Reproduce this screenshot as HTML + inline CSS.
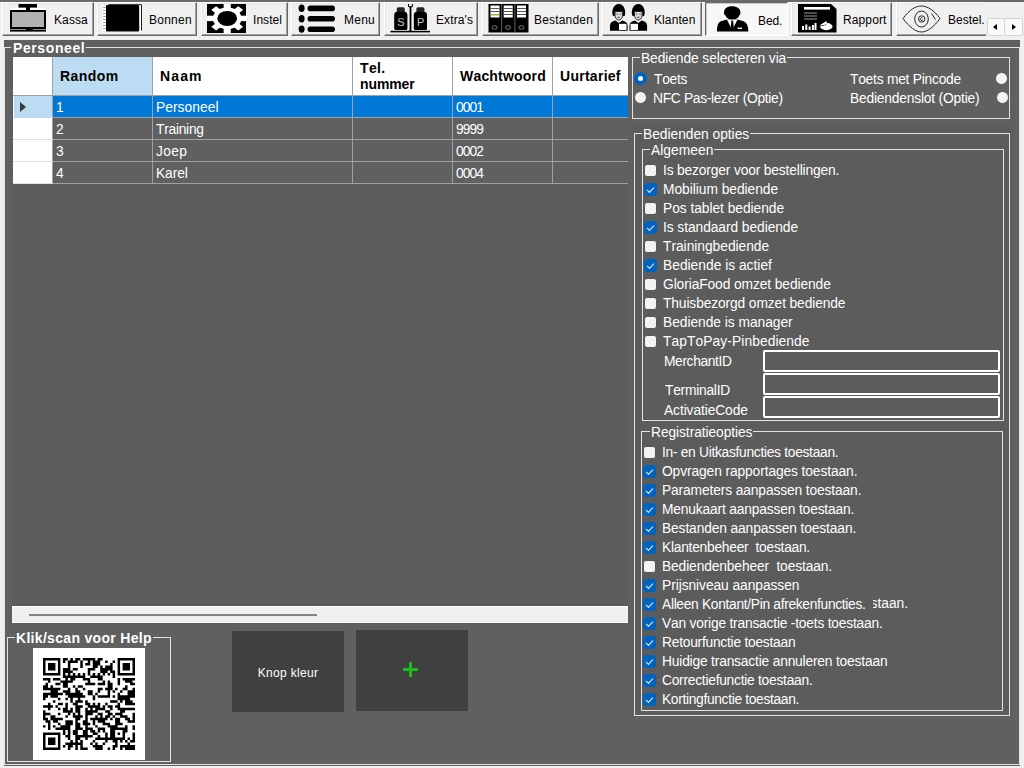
<!DOCTYPE html>
<html lang="nl">
<head>
<meta charset="utf-8">
<title>Personeel</title>
<style>
*{box-sizing:border-box;margin:0;padding:0}
html,body{font-kerning:none;width:1024px;height:768px;overflow:hidden;background:#f0f0f0;font-family:"Liberation Sans",Arial,sans-serif;color:#fff}
.abs{position:absolute}
#top{position:absolute;left:0;top:0;width:1024px;height:2px;background:#696969}
.tab{position:absolute;top:2px;height:34px;background:#f0f0f0;border:1px solid;border-color:#fff #696969 #696969 #fff;box-shadow:inset -1px -1px 0 #a0a0a0,inset 1px 1px 0 #e6e6e6;color:#000;font-size:12px;white-space:nowrap}
.tab span{position:absolute;top:10px;line-height:14px}
.tab svg{position:absolute}
.tab.sel{background:repeating-conic-gradient(#fff 0 25%,#f0f0f0 0 50%) 0 0/2px 2px;border-color:#696969 #fff #fff #696969;box-shadow:inset 1px 1px 0 #c8c8c8}
#panel{position:absolute;left:4px;top:40px;width:1016px;height:726px;background:#606060}
.gb{position:absolute;border:1px solid #e4e4e4}
.gb>.lg{position:absolute;background:#606060;white-space:nowrap;font-size:13.8px;line-height:15px;padding:0 1px}
.gb>.lg.b{font-weight:bold;font-size:14px;line-height:14px;margin-top:0}
.t{position:absolute;white-space:nowrap;font-size:13.8px;line-height:16px;margin-top:1px}
.cb{position:absolute;width:13px;height:13px;border-radius:3px;background:#f3f3f3;border:1px solid #575757}
.cb.on{background:#0063c0;border-color:#0063c0}
.cb.on:after{content:"";position:absolute;left:2.2px;top:3px;width:6.1px;height:3.1px;border-left:.9px solid #ececec;border-bottom:.9px solid #ececec;transform:rotate(-46deg)}
.rb{position:absolute;width:13px;height:13px;border-radius:50%;background:#f3f3f3;border:1px solid #585858}
.rb.on{background:#fff;border:4px solid #0063c0}
.tb{position:absolute;border:2px solid #fff;background:#5c5c5c;border-radius:2px}

.hd{position:absolute;top:0;height:39px;border-right:1px solid #a0a0a0;border-bottom:1px solid #a0a0a0;color:#000;font-weight:bold;font-size:14px;line-height:16px;display:flex;align-items:center;padding-left:7px}
.rh{position:absolute;left:0;width:40px;height:22px;background:#fff;border-right:1px solid #a0a0a0;border-bottom:1px solid #e0e0e0}
.rh.sel{background:#bcdcf4;border-left:1px solid #fff;border-bottom-color:#bcdcf4}
.rh i{position:absolute;left:5.6px;top:6.2px;border-left:6.3px solid #3a3a3a;border-top:5.2px solid transparent;border-bottom:5.2px solid transparent}
.c{position:absolute;height:22px;border-right:1px solid #a0a0a0;border-bottom:1px solid #a0a0a0;font-size:13.8px;line-height:21px;padding:1px 0 0 3px;white-space:nowrap;background:#606060}
.c.sel{background:#0078d7}
.gb.r>.lg{background:#5c5c5c}
.spin{position:absolute;top:18px;width:18px;height:18px;background:#fafafa;border:1px solid #d4d4d4;border-radius:2px}
.spin i{position:absolute;top:5px;width:0;height:0;border-top:3px solid transparent;border-bottom:3px solid transparent}
</style>
</head>
<body>
<div id="top"></div>
<!--TABS-->
<div class="tab" style="left:2px;width:92px">
<svg style="left:7px;top:1px" width="38" height="30" viewBox="0 0 38 30"><rect x="8.5" y="0" width="18.5" height="3.6" fill="#000"/><rect x="0" y="4" width="36" height="2.200" fill="#fff"/><rect x="16" y="3" width="4" height="4" fill="#000"/><rect x="1" y="7" width="34" height="17" fill="#b2b2b2" stroke="#000" stroke-width="2"/><rect x="16" y="24" width="7" height="2" fill="#000"/><rect x="0" y="25.6" width="36" height="2" fill="#000"/></svg>
<span style="left:51px;letter-spacing:0.1px">Kassa</span></div>
<div class="tab" style="left:97px;width:100px">
<svg style="left:5px;top:1px;overflow:visible" width="42" height="30" viewBox="0 0 42 30"><rect x="5" y="0.200" width="34" height="26.600" rx="1.200" fill="#000"/><rect x="5.800" y="1.100" width="32.300" height="27" fill="#fff"/><rect x="-0.300" y="1.800" width="4" height="25.400" fill="#fff"/><path d="M0.200 3.500h2.600M0.200 6.500h2.600M0.200 9.500h2.600M0.200 12.500h2.600M0.200 15.500h2.600M0.200 18.500h2.600M0.200 21.500h2.600M0.200 24.500h2.600" stroke="#999" stroke-width="1"/><rect x="3" y="1" width="33.200" height="26.600" rx="1" fill="#000"/></svg>
<span style="left:51px;letter-spacing:0.25px">Bonnen</span></div>
<div class="tab" style="left:201px;width:87px">
<svg style="left:5px;top:1px" width="40" height="30" viewBox="0 0 40 30"><rect x="0" y="0" width="39" height="29" fill="#000"/><g transform="translate(20.200 14.400) scale(1.32 1)" fill="#fff"><circle r="10.8"/><rect x="-2.700" y="-15" width="5.400" height="30"/><rect x="-16" y="-2.700" width="32" height="5.400"/><rect x="-2.600" y="-14.500" width="5.200" height="29" transform="rotate(45)"/><rect x="-2.600" y="-14.500" width="5.200" height="29" transform="rotate(-45)"/><circle r="7.500" fill="#000"/></g></svg>
<span style="left:51px;letter-spacing:0.05px">Instel</span></div>
<div class="tab" style="left:291px;width:89px">
<svg style="left:6px;top:1px" width="40" height="30" viewBox="0 0 40 30" fill="#000"><ellipse cx="3.600" cy="4.300" rx="3" ry="3.700"/><ellipse cx="3.600" cy="14.800" rx="3" ry="3.700"/><ellipse cx="3.600" cy="25.100" rx="3" ry="3.700"/><rect x="9.500" y="1.600" width="27.500" height="5.600" rx="2.800"/><rect x="9.500" y="12" width="27.500" height="5.600" rx="2.800"/><rect x="9.500" y="22.400" width="27.500" height="5.600" rx="2.800"/></svg>
<span style="left:52px;letter-spacing:0.25px">Menu</span></div>
<div class="tab" style="left:384px;width:94px">
<svg style="left:5px;top:0px" width="42" height="31" viewBox="0 0 42 31"><rect x="0.500" y="27.800" width="39.500" height="1.600" fill="#000"/><rect x="19.600" y="4" width="1.800" height="24" fill="#000"/><path d="M18.600 1v2.700h3.800V1" fill="none" stroke="#000" stroke-width="1"/><g><path d="M6.800 5.800q0-1.600 1.600-1.600h4.800q1.600 0 1.600 1.600v3.400h-8z" fill="#222"/><path d="M4.200 12q0-2.800 3-3.200h7.200q3 0.400 3 3.200v13.500q0 1.500-1.500 1.500h-10.200q-1.500 0-1.500-1.500z" fill="#000"/></g><g transform="translate(19.600 0)"><path d="M6.800 5.800q0-1.600 1.600-1.600h4.800q1.600 0 1.600 1.600v3.400h-8z" fill="#222"/><path d="M4.200 12q0-2.800 3-3.200h7.200q3 0.400 3 3.200v13.500q0 1.500-1.500 1.500h-10.200q-1.500 0-1.500-1.500z" fill="#000"/></g><text x="10.800" y="23" font-size="11" font-family="Liberation Sans,sans-serif" fill="#c4c4c4" text-anchor="middle">S</text><text x="30.600" y="23" font-size="11" font-family="Liberation Sans,sans-serif" fill="#c4c4c4" text-anchor="middle">P</text></svg>
<span style="left:51px;letter-spacing:0.1px">Extra's</span></div>
<div class="tab" style="left:482px;width:117px">
<svg style="left:5px;top:1px" width="42" height="30" viewBox="0 0 42 30"><rect x="0.500" y="0" width="40" height="28.500" fill="#000"/><rect x="13.300" y="0" width="0.800" height="28.500" fill="#777"/><rect x="26.500" y="0" width="0.800" height="28.500" fill="#777"/><g fill="#fff"><rect x="2.500" y="1.500" width="9" height="12"/><rect x="15.700" y="1.500" width="9" height="12"/><rect x="29" y="1.500" width="9" height="12"/></g><path d="M2.500 4.500h9M2.500 7.500h9M15.700 4.500h9M15.700 7.500h9M15.700 10.500h9M29 4.500h9M29 7.500h9M29 10.500h9" stroke="#555" stroke-width="1.200"/><path d="M2.500 10.800h9" stroke="#a09000" stroke-width="1.200"/><g fill="none" stroke="#8a8a8a" stroke-width="0.900"><ellipse cx="6.500" cy="23.500" rx="2.600" ry="1.800"/><ellipse cx="20" cy="23.500" rx="2.600" ry="1.800"/><ellipse cx="33.500" cy="23.500" rx="2.600" ry="1.800"/></g></svg>
<span style="left:51px;letter-spacing:0.18px">Bestanden</span></div>
<div class="tab" style="left:602px;width:100px">
<svg style="left:6px;top:0px" width="40" height="30" viewBox="0 0 40 30"><g id="pa"><path d="M3.800 12.500c-1.500-4 0.500-11.500 6-11.500s7.500 7.500 6 11.500c-0.500 1-1.500 1-2 0v-4h-8v4c-0.500 1-1.500 1-2 0z" fill="#000"/><path d="M6 8.500h7.600v3.500c0 3-1.800 5-3.800 5s-3.800-2-3.800-5z" fill="#ddd" stroke="#000" stroke-width="0.800"/><path d="M7.500 11h1.500M10.800 11h1.500M8.500 14.300h2.600" stroke="#333" stroke-width="0.900"/><path d="M1 27.800v-5c0-3 2-4.500 5.500-5.300l3.300 2.500 3.300-2.500c3.500 0.800 5.500 2.300 5.500 5.300v5z" fill="#000"/></g><rect x="10" y="20.800" width="7.500" height="6.200" fill="#fff"/><g transform="translate(19.500 0)"><path d="M3.800 12.500c-1.500-4 0.500-11.500 6-11.500s7.500 7.500 6 11.500c-0.500 1-1.500 1-2 0v-4h-8v4c-0.500 1-1.500 1-2 0z" fill="#000"/><path d="M6 8.500h7.600v3.500c0 3-1.800 5-3.800 5s-3.800-2-3.800-5z" fill="#ddd" stroke="#000" stroke-width="0.800"/><path d="M7.500 11h1.500M10.800 11h1.500M8.500 14.300h2.600" stroke="#333" stroke-width="0.900"/><path d="M1 27.800v-5c0-3 2-4.500 5.500-5.300l3.300 2.500 3.300-2.500c3.500 0.800 5.500 2.300 5.500 5.300v5z" fill="#000"/><rect x="2" y="20.800" width="7.500" height="6.200" fill="#fff"/></g></svg>
<span style="left:51px;letter-spacing:0.1px">Klanten</span></div>
<div class="tab sel" style="left:705px;width:83px">
<svg style="left:10px;top:2px" width="36" height="28" viewBox="0 0 36 28"><path d="M8 7.500c0-4 3-6.300 8-6.300s8.500 2.300 8.500 6.300c0 1.500-0.500 2.500-1.300 3c-0.500 2-3 3.700-4.500 4h-4.500c-2-0.500-4-2-4.700-4c-1-0.500-1.500-1.500-1.500-3z" fill="#000"/><path d="M1 26.500c0-6 1-9 4-10.200l5-1.600h12.500l5 1.600c3 1.200 4.800 4.200 4.800 10.200z" fill="#000"/><path d="M11 14.800l4 8 1.200-6 1.200 6 4-8z" fill="#fff"/><path d="M15.400 15.500h1.700l0.600 6-1.500 1.800-1.400-1.800z" fill="#000"/><rect x="21.500" y="22.600" width="4.500" height="1.300" fill="#fff"/></svg>
<span style="left:52px;top:11px;letter-spacing:-0.1px">Bed.</span></div>
<div class="tab" style="left:791px;width:101px">
<svg style="left:6px;top:1px" width="40" height="30" viewBox="0 0 40 30"><path d="M0 0h33l5.500 5v23.500h-38.500z" fill="#000"/><rect x="6" y="3" width="26" height="2.600" fill="#fff"/><path d="M6 9h13M6 12h13M6 15h13" stroke="#999" stroke-width="1.100"/><g fill="#fff"><rect x="4" y="22" width="2" height="4"/><rect x="7.300" y="20.500" width="2" height="5.500"/><rect x="10.600" y="22.500" width="2" height="3.500"/><rect x="13.900" y="21" width="2" height="5"/><rect x="16.500" y="19" width="2" height="7"/><ellipse cx="28.300" cy="22.500" rx="6.200" ry="3.700"/></g><path d="M22 22l6.300-1.500 1-2.500" stroke="#000" stroke-width="0.800" fill="none"/><path d="M21.500 21.500l7-4.500 0.500 3.300z" fill="#fff"/></svg>
<span style="left:51px;letter-spacing:0.12px">Rapport</span></div>
<div class="abs" style="left:896px;top:2px;width:90px;height:34px;overflow:hidden"><div class="tab" style="left:0;top:0;width:110px">
<svg style="left:5px;top:1px" width="40" height="30" viewBox="0 0 40 30" fill="none" stroke="#111" stroke-width="0.900"><path d="M1 14.500C8 5 14 2 19.500 2S32 6 38 14.500C32 23 25 28 19.500 28S7 23 1 14.500z"/><ellipse cx="19.500" cy="15" rx="6.800" ry="8"/><circle cx="19.700" cy="15" r="3.200"/><path d="M21 15.800a1.400 1.400 0 1 1 -0.500-1.800"/><path d="M29.500 9.500l4 6"/></svg>
<span style="left:51px;letter-spacing:0px">Bestel.</span></div></div>
<div class="spin" style="left:987px"><i style="border-right:4px solid #000;left:5px"></i></div>
<div class="spin" style="left:1004px;width:19px"><i style="border-left:4px solid #000;left:7px"></i></div>
<!--/TABS-->
<div id="panel"></div>
<!--MAIN-->
<div class="gb" style="left:4px;top:47px;width:1016px;height:718px"><div class="lg b" style="left:6px;top:-7px;padding:0 1px 0 2px;letter-spacing:0.6px">Personeel</div></div>
<div id="grid" class="abs" style="left:12px;top:56px;width:616px;height:567px;background:#5c5c5c;overflow:hidden"><div class="abs" style="left:1px;top:1px;width:615px;height:566px">
<div class="hd" style="left:0px;width:40px;background:#fff"><span></span></div>
<div class="hd" style="left:40px;width:100px;background:#bcdcf4"><span><b style="font-weight:bold;letter-spacing:0.42px">Random</b></span></div>
<div class="hd" style="left:140px;width:200px;background:#fff"><span><b style="font-weight:bold;letter-spacing:1.12px">Naam</b></span></div>
<div class="hd" style="left:340px;width:100px;background:#fff"><span><b style="font-weight:bold;letter-spacing:0.36px">Tel.</b><br><b style="font-weight:bold;letter-spacing:-0.11px">nummer</b></span></div>
<div class="hd" style="left:440px;width:100px;background:#fff"><span><b style="font-weight:bold;letter-spacing:0.19px">Wachtwoord</b></span></div>
<div class="hd" style="left:540px;width:100px;background:#fff"><span><b style="font-weight:bold;letter-spacing:0.27px">Uurtarief</b></span></div>
<div class="rh sel" style="top:39px"><i></i></div>
<div class="c sel" style="left:40px;top:39px;width:100px">1</div>
<div class="c sel" style="left:140px;top:39px;width:200px;letter-spacing:0.04px">Personeel</div>
<div class="c sel" style="left:340px;top:39px;width:100px"></div>
<div class="c sel" style="left:440px;top:39px;width:100px;letter-spacing:-0.93px">0001</div>
<div class="c sel" style="left:540px;top:39px;width:100px"></div>
<div class="rh" style="top:61px"></div>
<div class="c" style="left:40px;top:61px;width:100px">2</div>
<div class="c" style="left:140px;top:61px;width:200px;letter-spacing:-0.27px">Training</div>
<div class="c" style="left:340px;top:61px;width:100px"></div>
<div class="c" style="left:440px;top:61px;width:100px;letter-spacing:-0.93px">9999</div>
<div class="c" style="left:540px;top:61px;width:100px"></div>
<div class="rh" style="top:83px"></div>
<div class="c" style="left:40px;top:83px;width:100px">3</div>
<div class="c" style="left:140px;top:83px;width:200px;letter-spacing:0.36px">Joep</div>
<div class="c" style="left:340px;top:83px;width:100px"></div>
<div class="c" style="left:440px;top:83px;width:100px;letter-spacing:-0.93px">0002</div>
<div class="c" style="left:540px;top:83px;width:100px"></div>
<div class="rh" style="top:105px"></div>
<div class="c" style="left:40px;top:105px;width:100px">4</div>
<div class="c" style="left:140px;top:105px;width:200px;letter-spacing:-0.08px">Karel</div>
<div class="c" style="left:340px;top:105px;width:100px"></div>
<div class="c" style="left:440px;top:105px;width:100px;letter-spacing:-0.93px">0004</div>
<div class="c" style="left:540px;top:105px;width:100px"></div>
</div><div class="abs" style="left:0;top:550px;width:616px;height:17px;background:#f0f0f0;border-top:1px solid #fff;border-bottom:1px solid #fff"><div class="abs" style="left:17px;top:7px;width:288px;height:2px;background:#858585"></div></div>
</div>
<div class="gb" style="left:7px;top:637px;width:164px;height:125px"><div class="lg b" style="left:7px;top:-7px;letter-spacing:0.31px">Klik/scan voor Help</div></div>
<div class="abs" style="left:33px;top:648px;width:112px;height:112px;background:#fff"><!--QR--><svg class="abs" style="left:10px;top:10px" width="92" height="92" viewBox="0 0 37 37"><path d="M0 0h7v1h-7zM8 0h2v1h-2zM11 0h1v1h-1zM13 0h2v1h-2zM16 0h5v1h-5zM22 0h2v1h-2zM30 0h7v1h-7zM0 1h1v1h-1zM6 1h1v1h-1zM8 1h1v1h-1zM10 1h4v1h-4zM15 1h1v1h-1zM18 1h1v1h-1zM20 1h3v1h-3zM25 1h1v1h-1zM28 1h1v1h-1zM30 1h1v1h-1zM36 1h1v1h-1zM0 2h1v1h-1zM2 2h3v1h-3zM6 2h1v1h-1zM10 2h1v1h-1zM15 2h1v1h-1zM17 2h2v1h-2zM20 2h3v1h-3zM27 2h1v1h-1zM30 2h1v1h-1zM32 2h3v1h-3zM36 2h1v1h-1zM0 3h1v1h-1zM2 3h3v1h-3zM6 3h1v1h-1zM10 3h1v1h-1zM15 3h1v1h-1zM20 3h2v1h-2zM23 3h1v1h-1zM25 3h3v1h-3zM30 3h1v1h-1zM32 3h3v1h-3zM36 3h1v1h-1zM0 4h1v1h-1zM2 4h3v1h-3zM6 4h1v1h-1zM8 4h3v1h-3zM12 4h2v1h-2zM18 4h3v1h-3zM23 4h5v1h-5zM30 4h1v1h-1zM32 4h3v1h-3zM36 4h1v1h-1zM0 5h1v1h-1zM6 5h1v1h-1zM8 5h4v1h-4zM18 5h1v1h-1zM23 5h3v1h-3zM27 5h2v1h-2zM30 5h1v1h-1zM36 5h1v1h-1zM0 6h7v1h-7zM8 6h1v1h-1zM10 6h1v1h-1zM12 6h1v1h-1zM14 6h1v1h-1zM16 6h1v1h-1zM18 6h1v1h-1zM20 6h1v1h-1zM22 6h1v1h-1zM24 6h1v1h-1zM26 6h1v1h-1zM28 6h1v1h-1zM30 6h7v1h-7zM8 7h9v1h-9zM19 7h5v1h-5zM28 7h1v1h-1zM0 8h3v1h-3zM4 8h3v1h-3zM9 8h1v1h-1zM11 8h2v1h-2zM16 8h3v1h-3zM22 8h2v1h-2zM30 8h1v1h-1zM32 8h5v1h-5zM2 9h1v1h-1zM7 9h5v1h-5zM18 9h1v1h-1zM24 9h1v1h-1zM26 9h1v1h-1zM30 9h1v1h-1zM33 9h3v1h-3zM1 10h1v1h-1zM5 10h2v1h-2zM8 10h2v1h-2zM17 10h4v1h-4zM22 10h3v1h-3zM26 10h2v1h-2zM30 10h1v1h-1zM35 10h2v1h-2zM0 11h2v1h-2zM3 11h1v1h-1zM8 11h2v1h-2zM12 11h1v1h-1zM14 11h2v1h-2zM26 11h2v1h-2zM33 11h1v1h-1zM0 12h7v1h-7zM10 12h1v1h-1zM13 12h1v1h-1zM16 12h1v1h-1zM22 12h2v1h-2zM25 12h3v1h-3zM29 12h1v1h-1zM32 12h2v1h-2zM36 12h1v1h-1zM3 13h3v1h-3zM8 13h3v1h-3zM13 13h2v1h-2zM18 13h2v1h-2zM22 13h1v1h-1zM26 13h1v1h-1zM28 13h1v1h-1zM31 13h1v1h-1zM34 13h3v1h-3zM0 14h8v1h-8zM9 14h7v1h-7zM18 14h2v1h-2zM21 14h1v1h-1zM26 14h1v1h-1zM30 14h1v1h-1zM34 14h3v1h-3zM0 15h2v1h-2zM3 15h3v1h-3zM10 15h7v1h-7zM20 15h1v1h-1zM22 15h5v1h-5zM28 15h1v1h-1zM30 15h7v1h-7zM0 16h1v1h-1zM6 16h1v1h-1zM9 16h1v1h-1zM11 16h1v1h-1zM14 16h1v1h-1zM20 16h1v1h-1zM30 16h5v1h-5zM4 17h1v1h-1zM11 17h1v1h-1zM13 17h3v1h-3zM17 17h1v1h-1zM27 17h3v1h-3zM31 17h1v1h-1zM33 17h3v1h-3zM2 18h1v1h-1zM6 18h2v1h-2zM9 18h1v1h-1zM12 18h2v1h-2zM17 18h2v1h-2zM20 18h1v1h-1zM22 18h1v1h-1zM25 18h1v1h-1zM30 18h1v1h-1zM33 18h4v1h-4zM0 19h4v1h-4zM5 19h1v1h-1zM9 19h1v1h-1zM13 19h3v1h-3zM18 19h5v1h-5zM24 19h1v1h-1zM26 19h2v1h-2zM29 19h2v1h-2zM2 20h1v1h-1zM6 20h1v1h-1zM8 20h2v1h-2zM11 20h1v1h-1zM13 20h2v1h-2zM17 20h1v1h-1zM19 20h1v1h-1zM21 20h4v1h-4zM27 20h1v1h-1zM30 20h7v1h-7zM0 21h1v1h-1zM8 21h4v1h-4zM13 21h2v1h-2zM17 21h5v1h-5zM25 21h2v1h-2zM31 21h2v1h-2zM0 22h3v1h-3zM6 22h1v1h-1zM10 22h1v1h-1zM12 22h1v1h-1zM14 22h1v1h-1zM17 22h3v1h-3zM22 22h2v1h-2zM26 22h2v1h-2zM29 22h3v1h-3zM36 22h1v1h-1zM0 23h1v1h-1zM3 23h2v1h-2zM9 23h1v1h-1zM12 23h4v1h-4zM17 23h1v1h-1zM21 23h1v1h-1zM23 23h1v1h-1zM25 23h2v1h-2zM28 23h1v1h-1zM31 23h3v1h-3zM36 23h1v1h-1zM0 24h2v1h-2zM3 24h5v1h-5zM13 24h2v1h-2zM17 24h1v1h-1zM19 24h7v1h-7zM27 24h1v1h-1zM29 24h2v1h-2zM33 24h2v1h-2zM36 24h1v1h-1zM1 25h2v1h-2zM4 25h2v1h-2zM9 25h3v1h-3zM13 25h1v1h-1zM16 25h2v1h-2zM20 25h1v1h-1zM22 25h3v1h-3zM29 25h2v1h-2zM34 25h3v1h-3zM2 26h1v1h-1zM6 26h1v1h-1zM9 26h3v1h-3zM13 26h2v1h-2zM16 26h3v1h-3zM20 26h1v1h-1zM24 26h3v1h-3zM29 26h3v1h-3zM0 27h1v1h-1zM2 27h1v1h-1zM4 27h1v1h-1zM7 27h4v1h-4zM13 27h2v1h-2zM17 27h1v1h-1zM21 27h1v1h-1zM26 27h4v1h-4zM33 27h1v1h-1zM36 27h1v1h-1zM2 28h1v1h-1zM5 28h6v1h-6zM13 28h3v1h-3zM17 28h3v1h-3zM22 28h3v1h-3zM27 28h7v1h-7zM36 28h1v1h-1zM8 29h1v1h-1zM10 29h1v1h-1zM12 29h2v1h-2zM16 29h2v1h-2zM19 29h2v1h-2zM22 29h1v1h-1zM24 29h1v1h-1zM27 29h2v1h-2zM32 29h2v1h-2zM0 30h7v1h-7zM8 30h1v1h-1zM10 30h1v1h-1zM12 30h2v1h-2zM16 30h2v1h-2zM20 30h2v1h-2zM25 30h1v1h-1zM27 30h2v1h-2zM30 30h1v1h-1zM32 30h1v1h-1zM36 30h1v1h-1zM0 31h1v1h-1zM6 31h1v1h-1zM9 31h2v1h-2zM13 31h7v1h-7zM22 31h1v1h-1zM25 31h1v1h-1zM27 31h2v1h-2zM32 31h1v1h-1zM36 31h1v1h-1zM0 32h1v1h-1zM2 32h3v1h-3zM6 32h1v1h-1zM10 32h1v1h-1zM13 32h2v1h-2zM17 32h1v1h-1zM21 32h12v1h-12zM34 32h1v1h-1zM36 32h1v1h-1zM0 33h1v1h-1zM2 33h3v1h-3zM6 33h1v1h-1zM11 33h1v1h-1zM13 33h1v1h-1zM15 33h1v1h-1zM20 33h1v1h-1zM25 33h1v1h-1zM28 33h2v1h-2zM31 33h1v1h-1zM33 33h1v1h-1zM35 33h2v1h-2zM0 34h1v1h-1zM2 34h3v1h-3zM6 34h1v1h-1zM9 34h7v1h-7zM19 34h1v1h-1zM21 34h1v1h-1zM24 34h1v1h-1zM29 34h1v1h-1zM34 34h1v1h-1zM0 35h1v1h-1zM6 35h1v1h-1zM8 35h1v1h-1zM10 35h2v1h-2zM13 35h1v1h-1zM15 35h1v1h-1zM20 35h4v1h-4zM28 35h2v1h-2zM31 35h6v1h-6zM0 36h7v1h-7zM10 36h1v1h-1zM13 36h1v1h-1zM15 36h3v1h-3zM21 36h3v1h-3zM26 36h1v1h-1zM28 36h1v1h-1zM31 36h1v1h-1zM33 36h4v1h-4z" fill="#000"/></svg><!--/QR--></div>
<div class="abs" style="left:232px;top:631px;width:112px;height:81px;background:#404040"><div class="t" style="left:0;width:112px;text-align:center;top:32.6px;font-size:12px;letter-spacing:0.33px">Knop kleur</div></div>
<div class="abs" style="left:356px;top:630px;width:112px;height:81px;background:#404040"><div class="abs" style="left:47px;top:37.5px;width:15px;height:3px;background:#1bbb1b"></div><div class="abs" style="left:53px;top:31.5px;width:3px;height:15px;background:#1bbb1b"></div></div>
<div class="abs" style="left:634px;top:125px;width:377px;height:592px;background:#5c5c5c"></div>
<div class="gb" style="left:632px;top:57px;width:378px;height:62px"><div class="lg" style="left:7px;top:-7.4px;letter-spacing:-0.09px">Bediende selecteren via</div></div>
<div class="rb on" style="left:634px;top:72px"></div><div class="t" style="left:654px;top:71px;letter-spacing:-0.25px">Toets</div>
<div class="rb" style="left:634px;top:91px"></div><div class="t" style="left:653px;top:90px;letter-spacing:-0.32px">NFC Pas-lezer (Optie)</div>
<div class="t" style="left:850px;top:71px;letter-spacing:-0.24px">Toets met Pincode</div><div class="rb" style="left:995px;top:72px"></div>
<div class="t" style="left:850px;top:90px;letter-spacing:-0.19px">Bediendenslot (Optie)</div><div class="rb" style="left:996px;top:91px"></div>
<div class="gb r" style="left:634px;top:133px;width:376px;height:583px"><div class="lg" style="left:7px;top:-7.4px;letter-spacing:-0.03px">Bedienden opties</div></div>
<div class="gb r" style="left:642px;top:149px;width:362px;height:272px"><div class="lg" style="left:7px;top:-7.4px;letter-spacing:0.04px">Algemeen</div></div>
<div class="cb" style="left:644px;top:164px"></div><div class="t" style="left:663px;top:162px;letter-spacing:-0.16px">Is bezorger voor bestellingen.</div>
<div class="cb on" style="left:644px;top:183px"></div><div class="t" style="left:663px;top:181px;letter-spacing:-0.04px">Mobilium bediende</div>
<div class="cb" style="left:644px;top:202px"></div><div class="t" style="left:663px;top:200px;letter-spacing:-0.05px">Pos tablet bediende</div>
<div class="cb on" style="left:644px;top:221px"></div><div class="t" style="left:663px;top:219px;letter-spacing:-0.07px">Is standaard bediende</div>
<div class="cb" style="left:644px;top:240px"></div><div class="t" style="left:663px;top:238px;letter-spacing:-0.03px">Trainingbediende</div>
<div class="cb on" style="left:644px;top:259px"></div><div class="t" style="left:663px;top:257px">Bediende is actief</div>
<div class="cb" style="left:644px;top:278px"></div><div class="t" style="left:663px;top:276px;letter-spacing:-0.1px">GloriaFood omzet bediende</div>
<div class="cb" style="left:644px;top:297px"></div><div class="t" style="left:663px;top:295px;letter-spacing:-0.12px">Thuisbezorgd omzet bediende</div>
<div class="cb" style="left:644px;top:316px"></div><div class="t" style="left:663px;top:314px;letter-spacing:-0.04px">Bediende is manager</div>
<div class="cb" style="left:644px;top:335px"></div><div class="t" style="left:663px;top:333px;letter-spacing:0.08px">TapToPay-Pinbediende</div>
<div class="t" style="left:664px;top:353px;letter-spacing:-0.38px">MerchantID</div><div class="tb" style="left:763px;top:350px;width:237px;height:22px"></div>
<div class="t" style="left:665px;top:382px;letter-spacing:-0.25px">TerminalID</div><div class="tb" style="left:763px;top:373px;width:237px;height:22px"></div>
<div class="t" style="left:664px;top:402px;letter-spacing:-0.1px">ActivatieCode</div><div class="tb" style="left:763px;top:396px;width:237px;height:22px"></div>
<div class="gb r" style="left:641px;top:431px;width:362px;height:280px"><div class="lg" style="left:8px;top:-7.4px;letter-spacing:-0.08px">Registratieopties</div></div>
<div class="cb" style="left:643px;top:446px"></div><div class="t" style="left:662px;top:444px;letter-spacing:-0.3px">In- en Uitkasfuncties toestaan.</div>
<div class="cb on" style="left:643px;top:465px"></div><div class="t" style="left:662px;top:463px;letter-spacing:-0.11px">Opvragen rapportages toestaan.</div>
<div class="cb on" style="left:643px;top:484px"></div><div class="t" style="left:662px;top:482px;letter-spacing:-0.13px">Parameters aanpassen toestaan.</div>
<div class="cb on" style="left:643px;top:503px"></div><div class="t" style="left:662px;top:501px;letter-spacing:-0.17px">Menukaart aanpassen toestaan.</div>
<div class="cb on" style="left:643px;top:522px"></div><div class="t" style="left:662px;top:520px;letter-spacing:-0.13px">Bestanden aanpassen toestaan.</div>
<div class="cb on" style="left:643px;top:541px"></div><div class="t" style="left:662px;top:539px;letter-spacing:-0.26px">Klantenbeheer&nbsp; toestaan.</div>
<div class="cb" style="left:643px;top:560px"></div><div class="t" style="left:662px;top:558px;letter-spacing:-0.13px">Bediendenbeheer&nbsp; toestaan.</div>
<div class="cb on" style="left:643px;top:579px"></div><div class="t" style="left:662px;top:577px;letter-spacing:-0.07px">Prijsniveau aanpassen</div>
<div class="cb on" style="left:643px;top:598px"></div><div class="t" style="left:662px;top:596px;letter-spacing:-0.32px">Alleen Kontant/Pin afrekenfuncties.</div><div class="abs" style="left:873px;top:595px;width:40px;height:17px;overflow:hidden"><div class="t" style="left:-2.5px;top:0">staan.</div></div>
<div class="cb on" style="left:643px;top:617px"></div><div class="t" style="left:662px;top:615px;letter-spacing:-0.21px">Van vorige transactie -toets toestaan.</div>
<div class="cb on" style="left:643px;top:636px"></div><div class="t" style="left:662px;top:634px;letter-spacing:-0.25px">Retourfunctie toestaan</div>
<div class="cb on" style="left:643px;top:655px"></div><div class="t" style="left:662px;top:653px;letter-spacing:-0.19px">Huidige transactie annuleren toestaan</div>
<div class="cb on" style="left:643px;top:674px"></div><div class="t" style="left:662px;top:672px;letter-spacing:-0.26px">Correctiefunctie toestaan.</div>
<div class="cb on" style="left:643px;top:693px"></div><div class="t" style="left:662px;top:691px;letter-spacing:-0.33px">Kortingfunctie toestaan.</div>
<!--/MAIN-->
</body>
</html>
